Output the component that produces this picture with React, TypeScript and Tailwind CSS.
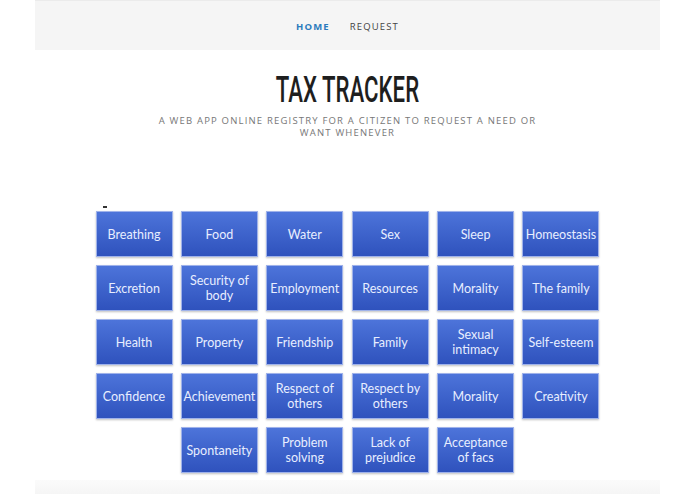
import React from "react";

const rows: (string | null)[][] = [
  ["Breathing", "Food", "Water", "Sex", "Sleep", "Homeostasis"],
  ["Excretion", "Security of body", "Employment", "Resources", "Morality", "The family"],
  ["Health", "Property", "Friendship", "Family", "Sexual intimacy", "Self-esteem"],
  ["Confidence", "Achievement", "Respect of others", "Respect by others", "Morality", "Creativity"],
  [null, "Spontaneity", "Problem solving", "Lack of prejudice", "Acceptance of facs", null],
];

const Box = ({ label }: { label: string | null }) => {
  if (!label) return <div />;
  return (
    <div className="flex items-center justify-center text-center px-1 border border-[#9fb2ea] bg-gradient-to-b from-[#4d74da] to-[#2f52bd] shadow-[0_1px_2px_rgba(0,0,0,0.25)] text-[#e8eeff] text-[12.5px] leading-[15px] font-['Lato','Noto_Sans',sans-serif]">
      {label}
    </div>
  );
};

export default function App() {
  return (
    <div className="w-[695px] h-[494px] bg-white overflow-hidden font-['Open_Sans',sans-serif]">
      <nav className="mx-[35px] h-[50px] pt-[4px] bg-[#f5f5f5] border-t border-[#ebebeb] flex items-center justify-center gap-[20px] text-[9.5px] tracking-[0.12em]">
        <a className="text-[#2b7bbd] font-bold">HOME</a>
        <a className="text-[#444]">REQUEST</a>
      </nav>
      <header className="flex flex-col items-center mt-[20px]">
        <h1 className="text-[37px] leading-[40px] text-[#1e1e1e] font-['Roboto',sans-serif] font-medium scale-x-[0.6] whitespace-nowrap">
          TAX TRACKER
        </h1>
        <p className="mt-[5px] w-[392px] text-center text-[9.5px] leading-[12px] tracking-[0.125em] text-[#777]">
          A WEB APP ONLINE REGISTRY FOR A CITIZEN TO REQUEST A NEED OR WANT WHENEVER
        </p>
      </header>
      <section className="mt-[67px] flex flex-col items-center">
        <div className="w-[504px]">
          <div className="ml-[7px] mb-[3px] w-[4px] h-[2px] bg-[#333]" />
          <div className="grid grid-cols-[repeat(6,77px)] auto-rows-[46px] gap-x-[8.4px] gap-y-[8px]">
            {rows.flat().map((label, i) => (
              <Box key={i} label={label} />
            ))}
          </div>
        </div>
      </section>
      <footer className="mx-[35px] mt-[7px] h-[20px] bg-gradient-to-b from-[#fbfbfb] to-[#f3f3f3]" />
    </div>
  );
}
